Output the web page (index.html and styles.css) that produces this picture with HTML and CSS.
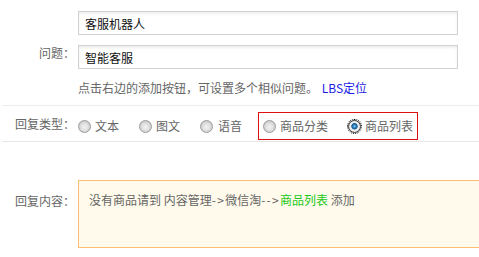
FILE: index.html
```html
<!DOCTYPE html>
<html lang="zh-CN">
<head>
<meta charset="utf-8">
<title>回复设置</title>
<link rel="stylesheet" href="styles.css">
</head>
<body>
<div class="form">
  <div class="row row-first">
    <span class="lbl"></span>
    <div class="field"><input class="txt" type="text" value="客服机器人"></div>
  </div>
  <div class="row">
    <span class="lbl lbl-q">问题：</span>
    <div class="field"><input class="txt" type="text" value="智能客服"></div>
  </div>
  <div class="row row-hint">
    <span class="lbl"></span>
    <p class="hint">点击右边的添加按钮，可设置多个相似问题。 <a class="link" href="#">LBS定位</a></p>
  </div>

  <div class="type-section">
    <div class="row row-type">
      <span class="lbl">回复类型：</span>
      <div class="radios">
        <label class="opt"><input class="radio" type="radio" name="t"><span>文本</span></label>
        <label class="opt"><input class="radio" type="radio" name="t"><span>图文</span></label>
        <label class="opt"><input class="radio" type="radio" name="t"><span>语音</span></label>
        <div class="hl-box">
          <label class="opt"><input class="radio" type="radio" name="t"><span>商品分类</span></label>
          <label class="opt"><input class="radio focus" type="radio" name="t" checked><span>商品列表</span></label>
        </div>
      </div>
    </div>
  </div>

  <div class="row row-content">
    <span class="lbl lbl-content">回复内容：</span>
    <div class="content-box">没有商品请到 内容管理<span class="arrow">-&gt;</span>微信淘<span class="arrow">--&gt;</span><span class="green">商品列表</span> 添加</div>
  </div>
</div>
</body>
</html>
```

FILE: styles.css
```css
html, body {
  margin: 0;
  padding: 0;
  background: #fff;
  overflow: hidden;
}

body {
  font-family: "Noto Sans CJK SC", "Microsoft YaHei", sans-serif;
  font-size: 12px;
  color: #666;
  text-spacing-trim: space-all;
}

.form {
  width: 560px;
  padding-top: 11px;
}

.row {
  display: grid;
  grid-template-columns: 75px 1fr;
  column-gap: 3px;
  align-items: center;
}

.row-first {
  margin-bottom: 10px;
}

.lbl {
  text-align: right;
  line-height: 20px;
  color: #666;
  white-space: nowrap;
}

.lbl-q {
  position: relative;
  top: -4px;
}

.field {
  width: 380px;
}

.txt {
  box-sizing: border-box;
  display: block;
  width: 380px;
  height: 24px;
  margin: 0;
  padding: 0 6px;
  border: 1px solid #d2d2d2;
  box-shadow: inset 0 2px 3px rgba(0, 0, 0, 0.07);
  font-family: "Noto Sans CJK SC", "Microsoft YaHei", sans-serif;
  font-size: 12px;
  color: #111;
  background: #fff;
  outline: none;
}

.row-hint {
  margin-top: 9px;
}

.hint {
  margin: 0;
  line-height: 20px;
  color: #666;
  white-space: nowrap;
}

.link {
  color: #1c1ce6;
  text-decoration: none;
  margin-left: 1px;
}

.type-section {
  margin-top: 7px;
  margin-left: 2px;
  border-top: 1px solid #ececec;
  border-bottom: 1px solid #e6e6e6;
  padding: 6px 0 1px;
}

.row-type {
  grid-template-columns: 73px 1fr;
}

.row-type .lbl {
  position: relative;
  top: -2px;
}

.radios {
  display: flex;
  align-items: center;
  height: 28px;
}

.opt {
  display: flex;
  align-items: center;
  gap: 4px;
  margin-right: 20px;
  color: #666;
  line-height: 20px;
  white-space: nowrap;
}

.opt:nth-child(3) span {
  margin-left: 1px;
}

.hl-box {
  box-sizing: border-box;
  display: flex;
  align-items: center;
  height: 28px;
  margin-left: -4px;
  padding: 0 4px 0 4px;
  border: 1px solid #e01010;
}

.hl-box .opt:last-child {
  margin-right: 0;
}

.radio {
  -webkit-appearance: none;
  appearance: none;
  box-sizing: border-box;
  width: 13px;
  height: 13px;
  margin: 0;
  border-radius: 50%;
  border: 1px solid #9c9c9c;
  background: radial-gradient(circle at 50% 55%, #f2f2f2 0, #e4e4e4 3px, #cfcfcf 5.5px, #bdbdbd 6.5px);
  flex: none;
}

.radio:checked {
  border-color: #3a3a3a;
  background: radial-gradient(circle at 50% 48%, #9ad3f5 0, #2e86c8 1.4px, #17598c 2.8px, #f4f4f4 3.6px, #e2e2e2 5.5px);
}

.radio.focus {
  outline: 1px dotted #000;
  outline-offset: 0;
}

.row-content {
  margin-top: 38px;
  align-items: start;
}

.lbl-content {
  margin-top: 11px;
}

.content-box {
  box-sizing: border-box;
  width: 460px;
  height: 68px;
  padding: 9px 10px;
  border: 1px solid #fbbd72;
  background: #fffaeb;
  line-height: 20px;
  color: #666;
  white-space: nowrap;
}

.arrow {
  letter-spacing: 1.3px;
}

.green {
  color: #19c919;
}
```
